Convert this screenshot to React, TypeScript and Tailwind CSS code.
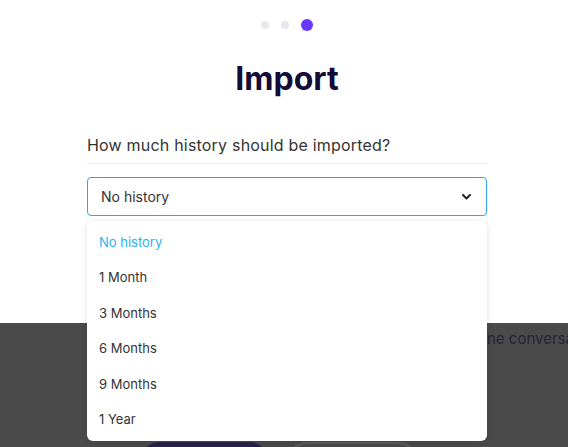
import { useState } from 'react';

const OPTIONS = ['No history', '1 Month', '3 Months', '6 Months', '9 Months', '1 Year'];

export default function App() {
  const [selected, setSelected] = useState('No history');

  return (
    <div className="relative h-[447px] w-full overflow-hidden bg-[#4a4a4a] font-['Inter',sans-serif]">
      {/* modal content */}
      <div className="h-[323px] bg-white">
        <div className="ml-[87px] w-[400px] pt-[19px]">
          <div className="flex items-center justify-center gap-[12px]">
            <span className="h-[8px] w-[8px] rounded-full bg-[#e6e6ee]" />
            <span className="h-[8px] w-[8px] rounded-full bg-[#e6e6ee]" />
            <span className="h-[12px] w-[12px] rounded-full bg-[#6637ff]" />
          </div>
          <h1 className="mt-[28px] text-center text-[32px] font-bold leading-[40px] text-[#140b36]">Import</h1>

          <p className="mt-[34px] pb-[6px] text-[16px] leading-[24px] tracking-[0.2px] text-[#333]">
            How much history should be imported?
          </p>
          <div className="h-px bg-[#eeeef0]" />

          <div className="relative mt-[13px]">
            <button className="flex h-[39px] w-full items-center justify-between rounded-[4px] border border-[#2ea8ea] bg-white pl-[13px] pr-[15px] text-left text-[14px] text-[#333]">
              <span>{selected}</span>
              <svg width="9" height="6" viewBox="0 0 9 6" fill="none">
                <path d="M1 1l3.5 3.5L8 1" stroke="#222" strokeWidth="2" strokeLinecap="round" strokeLinejoin="round" />
              </svg>
            </button>

            <ul className="absolute left-0 top-full z-10 mt-[5px] w-full rounded-[6px] bg-white pb-[4px] pt-[4px] shadow-[0_1px_6px_rgba(0,0,0,0.12)]">
              {OPTIONS.map((opt) => (
                <li
                  key={opt}
                  onClick={() => setSelected(opt)}
                  className={`flex h-[35.4px] items-center px-[12px] text-[13px] ${
                    opt === selected ? 'text-[#25b4f4]' : 'text-[#333]'
                  }`}
                >
                  {opt}
                </li>
              ))}
            </ul>
          </div>
        </div>
      </div>

      {/* dimmed page underneath */}
      <div className="flex pt-[6px] text-[15px] leading-[20px] text-[#26233d]">
        <span className="ml-[87px] w-[400px] shrink-0 text-right">Start with o</span>
        <span className="whitespace-nowrap">ne conversation at a time</span>
      </div>
      <div className="mt-[93px] flex gap-[18px] pl-[140px]">
        <div className="h-[40px] w-[129px] rounded-full bg-[#27214b]" />
        <div className="h-[40px] w-[131px] rounded-full border-2 border-[#5c5c5c]" />
      </div>
    </div>
  );
}
